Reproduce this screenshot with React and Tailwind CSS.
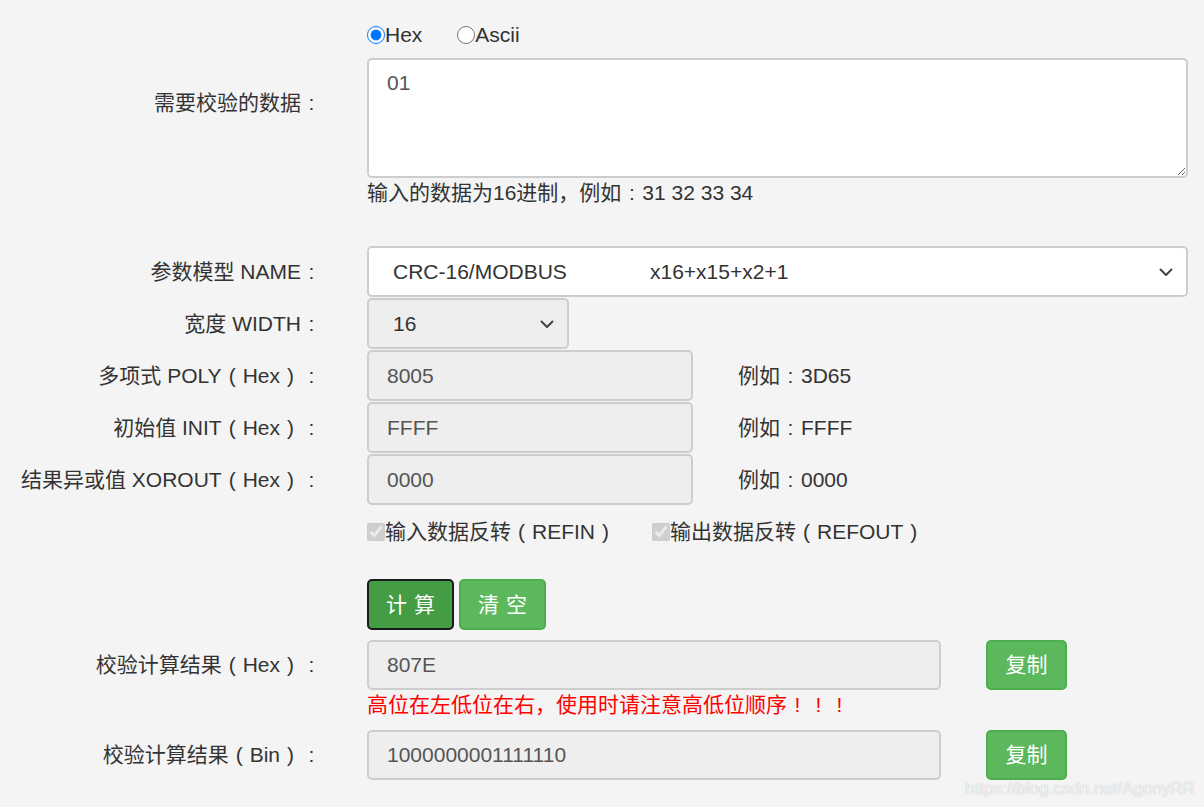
import React from "react";

// full-width punctuation drawn centred in a 1em box, as in the screenshot
const P = ({ c }) => <span className="inline-block w-[1em] text-center">{c}</span>;

const Label = ({ children }) => (
  <div className="w-[322px] shrink-0 text-right">{children}</div>
);

const Chevron = () => (
  <svg className="w-[16px] h-[16px] text-[#444]" viewBox="0 0 16 16" fill="none">
    <path d="M2.5 5.5 L8 11 L13.5 5.5" stroke="currentColor" strokeWidth="2" strokeLinecap="round" strokeLinejoin="round" />
  </svg>
);

const Field = ({ value, width }) => (
  <div className={`${width} flex items-center pl-[18px] bg-[#eeeeee] border-2 border-[#cdcdcd] rounded-[5px] text-[#555]`}>
    {value}
  </div>
);

const CopyButton = () => (
  <button className="w-[81px] h-[50px] ml-[45px] bg-[#5cb85c] border-2 border-[#4cae4c] rounded-[5px] text-white">
    复制
  </button>
);

const Hex = ({ name, unit = "Hex" }) => (
  <>
    {name}
    <P c="(" />
    {unit}
    <P c=")" />
    <P c=":" />
  </>
);

export default function App() {
  const params = [
    { label: "多项式 POLY", value: "8005", hint: "3D65" },
    { label: "初始值 INIT", value: "FFFF", hint: "FFFF" },
    { label: "结果异或值 XOROUT", value: "0000", hint: "0000" },
  ];

  return (
    <div
      className="relative min-h-[807px] bg-[#f4f4f4] text-[#333] text-[21px] pt-[22px] [text-spacing-trim:space-all]"
      style={{ fontFamily: '"Liberation Sans", "Noto Sans CJK SC", sans-serif' }}
    >
      {/* data input */}
      <div className="flex">
        <Label>
          <div className="pt-[66px] leading-[30px]">
            需要校验的数据<P c=":" />
          </div>
        </Label>
        <div className="ml-[45px] flex flex-col">
          <div className="h-[26px] flex items-center">
            <input type="radio" name="fmt" defaultChecked className="w-[18px] h-[18px] m-0 accent-[#0075ff]" />
            <span className="mr-[35px]">Hex</span>
            <input type="radio" name="fmt" className="w-[18px] h-[18px] m-0" />
            <span>Ascii</span>
          </div>
          <textarea
            defaultValue="01"
            className="mt-[10px] w-[821px] h-[120px] px-[18px] pt-[7px] bg-white border-2 border-[#cdcdcd] rounded-[5px] text-[#555] resize-y outline-none"
          />
          <div className="leading-[30px]">
            输入的数据为16进制，例如<P c=":" />31 32 33 34
          </div>
        </div>
      </div>

      {/* model */}
      <div className="flex items-center mt-[38px]">
        <Label>
          参数模型 NAME<P c=":" />
        </Label>
        <div className="ml-[45px] w-[821px] h-[51px] flex items-center justify-between pl-[24px] pr-[12px] bg-white border-2 border-[#cdcdcd] rounded-[5px] text-[#333]">
          <div className="flex">
            <span className="w-[257px]">CRC-16/MODBUS</span>
            <span>x16+x15+x2+1</span>
          </div>
          <Chevron />
        </div>
      </div>

      <div className="flex items-center mt-px">
        <Label>
          宽度 WIDTH<P c=":" />
        </Label>
        <div className="ml-[45px] w-[202px] h-[51px] flex items-center justify-between pl-[24px] pr-[12px] bg-[#eeeeee] border-2 border-[#cdcdcd] rounded-[5px] text-[#333]">
          <span>16</span>
          <Chevron />
        </div>
      </div>

      {params.map((p) => (
        <div key={p.label} className="flex items-center mt-px">
          <Label>
            <Hex name={p.label} />
          </Label>
          <div className="ml-[45px] flex items-center">
            <Field value={p.value} width="w-[326px] h-[51px]" />
            <span className="ml-[45px]">
              例如<P c=":" />
              {p.hint}
            </span>
          </div>
        </div>
      ))}

      {/* reflect */}
      <div className="flex items-center h-[53px]">
        <div className="w-[322px] shrink-0" />
        <div className="ml-[45px] flex items-center">
          <input type="checkbox" checked disabled readOnly className="w-[18px] h-[18px] m-0" />
          <span className="mr-[36px]">
            输入数据反转<P c="(" />REFIN<P c=")" />
          </span>
          <input type="checkbox" checked disabled readOnly className="w-[18px] h-[18px] m-0" />
          <span>
            输出数据反转<P c="(" />REFOUT<P c=")" />
          </span>
        </div>
      </div>

      {/* actions */}
      <div className="flex mt-[21px]">
        <div className="w-[322px] shrink-0" />
        <div className="ml-[45px] flex gap-[5px]">
          <button className="w-[87px] h-[51px] pl-[7px] bg-[#449d44] border-2 border-[#1a1a1a] rounded-[5px] text-white tracking-[7px]">
            计算
          </button>
          <button className="w-[87px] h-[51px] pl-[7px] bg-[#5cb85c] border-2 border-[#4cae4c] rounded-[5px] text-white tracking-[7px]">
            清空
          </button>
        </div>
      </div>

      {/* results */}
      <div className="flex items-center mt-[10px]">
        <Label>
          <Hex name="校验计算结果" />
        </Label>
        <div className="ml-[45px] flex items-center">
          <Field value="807E" width="w-[574px] h-[50px]" />
          <CopyButton />
        </div>
      </div>
      <div className="flex">
        <div className="w-[322px] shrink-0" />
        <div className="ml-[45px] leading-[30px] text-[#ff0000]">
          高位在左低位在右，使用时请注意高低位顺序<P c="!" /><P c="!" /><P c="!" />
        </div>
      </div>
      <div className="flex items-center mt-[10px]">
        <Label>
          <Hex name="校验计算结果" unit="Bin" />
        </Label>
        <div className="ml-[45px] flex items-center">
          <Field value="1000000001111110" width="w-[574px] h-[50px]" />
          <CopyButton />
        </div>
      </div>

      <div className="absolute right-[9px] bottom-[6px] text-[17px] text-white/80 [text-shadow:0_0_1px_#aaa]">
        https://blog.csdn.net/AgonyRR
      </div>
    </div>
  );
}
